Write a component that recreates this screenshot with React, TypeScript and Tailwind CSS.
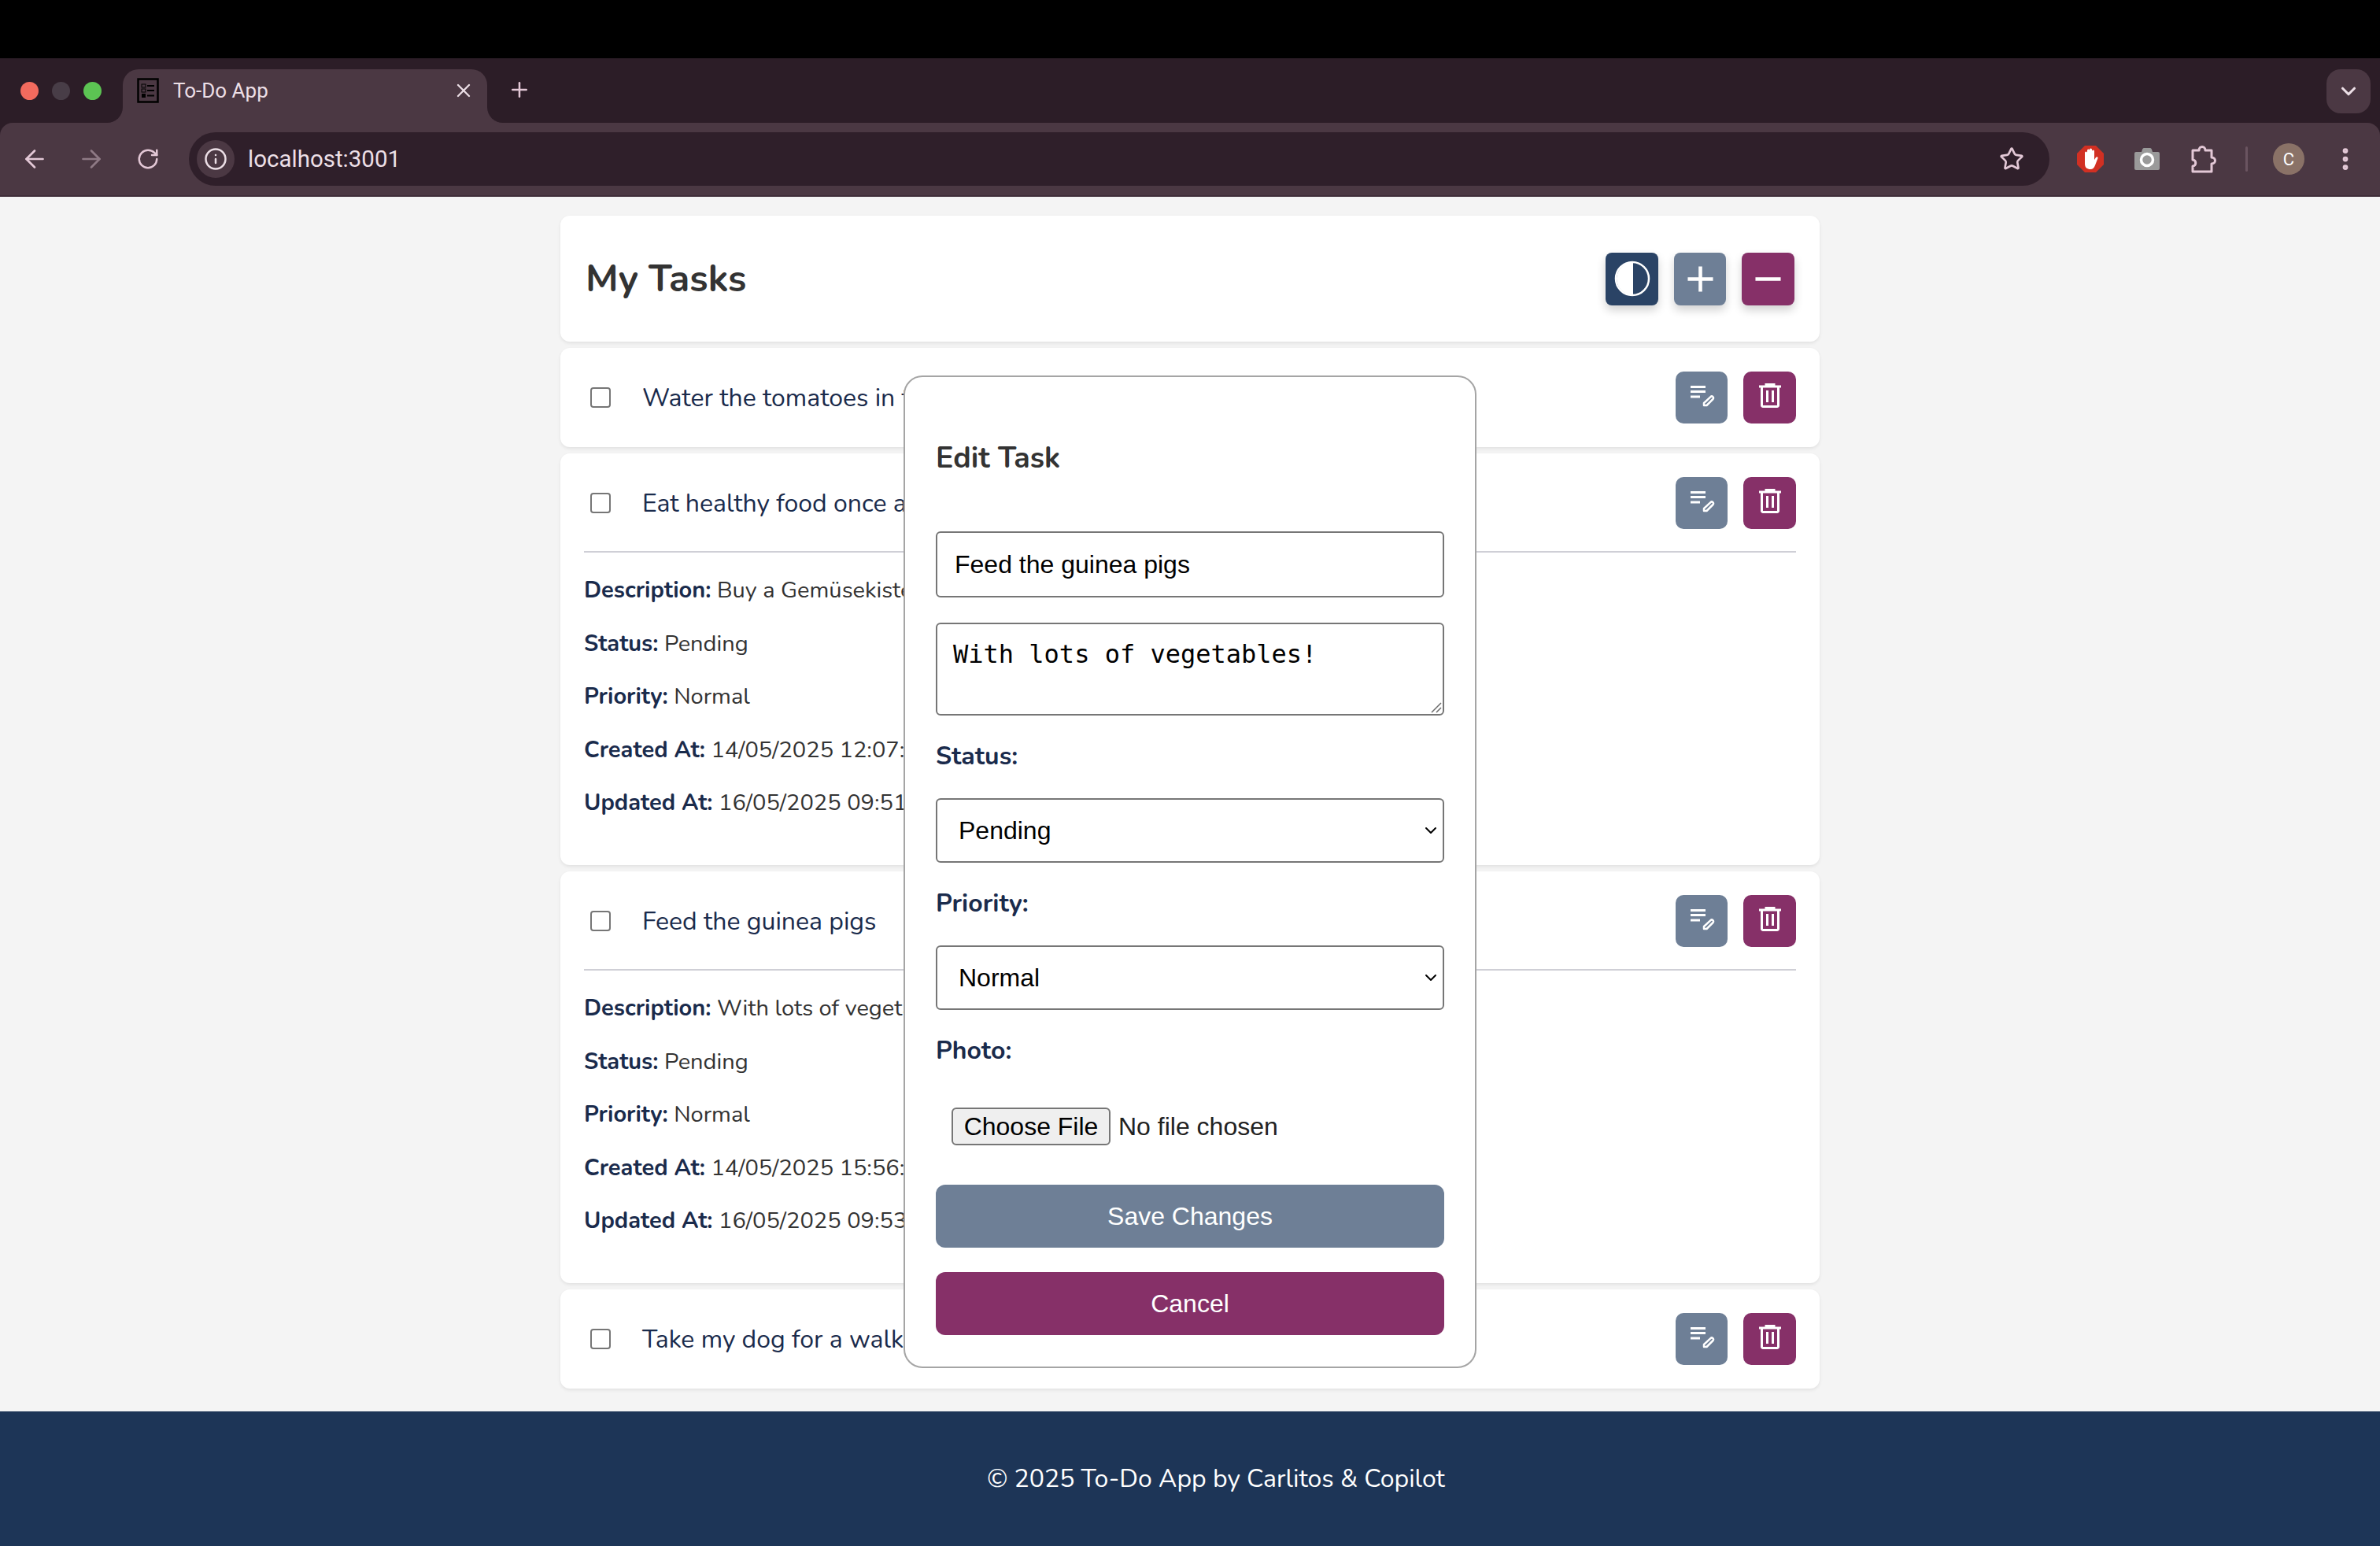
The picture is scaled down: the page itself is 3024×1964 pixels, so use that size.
import React from 'react';
import { ArrowLeft, ArrowRight, ChevronDown, EllipsisVertical, Info, Plus, RotateCw, Star, X } from 'lucide-react';
import { MdAdd, MdRemove } from 'react-icons/md';

const uiFont = "font-['Nunito','Lato','Noto_Sans',sans-serif]";
const formFont = "font-['Liberation_Sans',Arial,sans-serif]";

const Favicon = () => (
  <svg width="28" height="32" viewBox="0 0 28 32" fill="none">
    <rect x="1.5" y="1.5" width="25" height="29" fill="#4b3843" stroke="#000" strokeWidth="2.5" />
    <rect x="6" y="8" width="5" height="4" stroke="#000" strokeWidth="1" />
    <rect x="6" y="14" width="5" height="4" stroke="#000" strokeWidth="1" />
    <rect x="6" y="20" width="5" height="5" fill="#000" />
    <path d="M13 10h9M13 16h9M13 22.5h9" stroke="#000" strokeWidth="2" />
  </svg>
);

const AdBlock = () => (
  <svg width="34" height="34" viewBox="0 0 34 34">
    <path d="M10 0h14l10 10v14L24 34H10L0 24V10z" fill="#d13023" />
    <path
      d="M10 15V9a1.5 1.5 0 0 1 3 0v5V6a1.5 1.5 0 0 1 3 0v8V5a1.5 1.5 0 0 1 3 0v9V7a1.5 1.5 0 0 1 3 0v11l2-3c1-1.5 3-.5 2.5 1L23 25c-1 3-3 5-6 5-4 0-7-2-7-7z"
      fill="#fff"
    />
  </svg>
);

const Camera = () => (
  <svg width="32" height="32" viewBox="0 0 32 32">
    <path d="M2 7h7l1-3c.3-1 1-2 2-2h8c1 0 1.700 1 2 2l1 3h7a2 2 0 0 1 2 2v19a2 2 0 0 1-2 2H2a2 2 0 0 1-2-2V9a2 2 0 0 1 2-2z" fill="#9a9a9a" />
    <circle cx="16" cy="17" r="7.500" fill="none" stroke="#fff" strokeWidth="3.500" />
  </svg>
);

const Extensions = () => (
  <svg width="34" height="36" viewBox="0 0 34 36" fill="none" stroke="#e3c8d6" strokeWidth="3" strokeLinejoin="round">
    <path d="M3 7h8c0-6 8-6 8 0h8v9c6 0 6 8 0 8v10H3v-7c5 0 5-8 0-8z" />
  </svg>
);

const ContrastIcon = () => (
  <svg width="46" height="46" viewBox="0 0 46 46">
    <circle cx="23" cy="23" r="21" fill="none" stroke="#fff" strokeWidth="2.500" />
    <path d="M25 2a21 21 0 0 0 0 42z" fill="#fff" transform="translate(-1 0)" />
  </svg>
);

const EditIcon = () => (
  <svg width="31" height="27" viewBox="0 0 31 27" fill="none" className="-mt-[4px] ml-[3px]">
    <path d="M0 1.500h19M0 7.500h19M0 14h12" stroke="#fff" strokeWidth="3" />
    <path d="M16 22l8.500-7.800a2 2 0 0 1 3 2.800L19.500 25H16z" stroke="#fff" strokeWidth="2.500" strokeLinejoin="round" transform="translate(1 0)" />
  </svg>
);

const TrashIcon = () => (
  <svg width="28" height="31" viewBox="0 0 28 31" fill="none" className="-mt-[6px]">
    <path d="M0 4h28M9 3V1h10v2" stroke="#fff" strokeWidth="3" />
    <path d="M3.500 4v24a1.500 1.500 0 0 0 1.500 1.500h18a1.500 1.500 0 0 0 1.500-1.500V4" stroke="#fff" strokeWidth="3" />
    <path d="M10.500 9v15M17.500 9v15" stroke="#fff" strokeWidth="3" />
  </svg>
);

const BrowserChrome = () => (
  <>
    <div className="h-[74px] bg-black" />
    <div className="flex h-[82px] bg-[#2c1d27]">
      <div className="flex w-[156px] items-center gap-[17px] pl-[26px]">
        <span className="h-[23px] w-[23px] rounded-full bg-[#f26b5e]" />
        <span className="h-[23px] w-[23px] rounded-full bg-[#483d47]" />
        <span className="h-[23px] w-[23px] rounded-full bg-[#5cc453]" />
      </div>
      <div className="relative mt-[14px] flex w-[463px] items-center rounded-t-[20px] bg-[#4b3843] pb-[14px] pl-[18px] pr-[16px]">
        <span className="absolute -left-[20px] bottom-0 h-5 w-5 bg-[#4b3843]">
          <span className="block h-5 w-5 rounded-br-[20px] bg-[#2c1d27]" />
        </span>
        <span className="absolute -right-[20px] bottom-0 h-5 w-5 bg-[#4b3843]">
          <span className="block h-5 w-5 rounded-bl-[20px] bg-[#2c1d27]" />
        </span>
        <Favicon />
        <span className="ml-[18px] flex-1 font-['Roboto',sans-serif] text-[26px] text-[#ecdfe6]">To-Do App</span>
        <X size={28} strokeWidth={2} className="text-[#ecdfe6]" />
      </div>
      <div className="ml-[13px] flex h-[68px] w-[56px] items-center justify-center self-end pb-[16px]">
        <Plus size={30} strokeWidth={2} className="text-[#e3c8d6]" />
      </div>
      <div className="flex-1" />
      <div className="mr-[12px] mt-[14px] flex h-[56px] w-[56px] items-center justify-center rounded-[18px] bg-[#4b3843]">
        <ChevronDown size={30} strokeWidth={2.500} className="text-[#ecdfe6]" />
      </div>
    </div>
    <div className="bg-[#2c1d27]">
      <div className="flex h-[94px] items-center rounded-t-[16px] border-b-2 border-[#3f2e39] bg-[#4b3843] pl-[8px] pr-[8px]">
        <div className="flex w-[72px] justify-center text-[#e3c8d6]">
          <ArrowLeft size={36} strokeWidth={1.800} />
        </div>
        <div className="flex w-[72px] justify-center text-[#8e7a85]">
          <ArrowRight size={36} strokeWidth={1.800} />
        </div>
        <div className="flex w-[72px] justify-center text-[#e3c8d6]">
          <RotateCw size={30} strokeWidth={2} />
        </div>
        <div className="ml-[16px] flex h-[68px] flex-1 items-center rounded-full bg-[#2f1f2a] pl-[10px] pr-[12px]">
          <div className="flex h-[48px] w-[48px] items-center justify-center rounded-full bg-[#4b3843]">
            <Info size={30} strokeWidth={2} className="text-[#ecdfe6]" />
          </div>
          <span className="ml-[17px] flex-1 font-['Roboto',sans-serif] text-[29.500px] text-[#ecdfe6]">localhost:3001</span>
          <div className="flex w-[72px] justify-center">
            <Star size={32} strokeWidth={2} className="text-[#e3c8d6]" />
          </div>
        </div>
        <div className="ml-[16px] flex w-[72px] justify-center">
          <AdBlock />
        </div>
        <div className="flex w-[72px] justify-center">
          <Camera />
        </div>
        <div className="flex w-[72px] justify-center">
          <Extensions />
        </div>
        <div className="flex w-[36px] justify-center">
          <span className="h-[32px] w-[3px] rounded-full bg-[#6a5460]" />
        </div>
        <div className="flex w-[72px] justify-center">
          <span className="flex h-[40px] w-[40px] items-center justify-center rounded-full bg-[#8a7267] font-['Roboto',sans-serif] text-[22px] text-white">C</span>
        </div>
        <div className="flex w-[72px] justify-center">
          <EllipsisVertical size={36} strokeWidth={2.500} className="text-[#e3c8d6]" />
        </div>
      </div>
    </div>
  </>
);

const TaskActions = () => (
  <div className="flex gap-[20px]">
    <button className="flex h-[66px] w-[66px] items-center justify-center rounded-[10px] bg-[#6e7f96]">
      <EditIcon />
    </button>
    <button className="flex h-[66px] w-[67px] items-center justify-center rounded-[10px] bg-[#863068]">
      <TrashIcon />
    </button>
  </div>
);

const Detail = ({ label, value }: { label: string; value: string }) => (
  <p className="mt-[27.5px] h-[40px] text-[29px] leading-[40px] text-[#333333] first:mt-0">
    <strong className="font-bold text-[#1a2b4c]">{label}</strong> {value}
  </p>
);

interface TaskProps {
  title: string;
  details?: { label: string; value: string }[];
}

const TaskCard = ({ title, details }: TaskProps) => (
  <div className="rounded-[12px] bg-white px-[30px] shadow-[0_2px_4px_rgba(0,0,0,0.08)]">
    <div className={`flex items-center ${details ? 'h-[124px] pt-[2px]' : 'h-[126px]'}`}>
      <input type="checkbox" className="ml-[8px] h-[26px] w-[26px] appearance-none rounded-[4px] border-2 border-[#767676] bg-white" />
      <span className="ml-[40px] flex-1 pt-[1px] text-[32px] text-[#1a2b4c]">{title}</span>
      <TaskActions />
    </div>
    {details && (
      <div className="border-t-2 border-[#cfcfd6] pb-[59px] pt-[28px]">
        {details.map((d) => (
          <Detail key={d.label} {...d} />
        ))}
      </div>
    )}
  </div>
);

const fieldClass = `w-full rounded-[6px] border-2 border-[#767676] bg-white text-[32px] text-black ${formFont}`;

const SelectField = ({ value }: { value: string }) => (
  <div className="relative mt-[33px]">
    <select defaultValue={value} className={`h-[82px] appearance-none px-[27px] ${fieldClass}`}>
      <option>{value}</option>
    </select>
    <ChevronDown size={24} strokeWidth={2} className="absolute right-[5px] top-[29px] text-black" />
  </div>
);

const EditModal = () => (
  <div className={`absolute left-1/2 top-[477px] flex w-[728px] -translate-x-1/2 flex-col rounded-[24px] border-2 border-[#a5a5a5] bg-white px-[39px] pb-[40px] ${uiFont}`}>
    <h3 className="mt-[75px] h-[56px] text-[37.500px] font-bold leading-[56px] text-[#333333]">Edit Task</h3>
    <input readOnly defaultValue="Feed the guinea pigs" className={`mt-[65px] h-[84px] px-[22px] ${fieldClass}`} />
    <div className="relative mt-[32px] h-[118px]">
      <textarea
        readOnly
        defaultValue="With lots of vegetables!"
        className="block h-[118px] w-full resize-none rounded-[6px] border-2 border-[#767676] bg-white px-[20px] py-[19px] font-['DejaVu_Sans_Mono',monospace] text-[32px] leading-[38px] text-black"
      />
      <svg width="14" height="14" viewBox="0 0 14 14" className="absolute bottom-[3px] right-[3px]" stroke="#6b6b6b" strokeWidth="1.500">
        <path d="M1 13L13 1M7 13l6-6" />
      </svg>
    </div>
    <label className="mt-[32px] h-[40px] text-[32px] font-bold leading-[40px] text-[#1a2b4c]">Status:</label>
    <SelectField value="Pending" />
    <label className="mt-[32px] h-[40px] text-[32px] font-bold leading-[40px] text-[#1a2b4c]">Priority:</label>
    <SelectField value="Normal" />
    <label className="mt-[32px] h-[40px] text-[32px] font-bold leading-[40px] text-[#1a2b4c]">Photo:</label>
    <div className={`mt-[52px] flex items-center pl-[20px] text-[32px] text-[#222222] ${formFont}`}>
      <button className="h-[48px] w-[202px] rounded-[6px] border-2 border-[#767676] bg-[#efefef] leading-none text-black">Choose File</button>
      <span className="ml-[10px]">No file chosen</span>
    </div>
    <button className={`mt-[50px] h-[80px] rounded-[12px] bg-[#6e7f96] text-[32px] text-white ${formFont}`}>Save Changes</button>
    <button className={`mt-[31px] h-[80px] rounded-[12px] bg-[#863068] text-[32px] text-white ${formFont}`}>Cancel</button>
  </div>
);

const tasks: TaskProps[] = [
  { title: 'Water the tomatoes in the garden' },
  {
    title: 'Eat healthy food once a day',
    details: [
      { label: 'Description:', value: 'Buy a Gemüsekiste' },
      { label: 'Status:', value: 'Pending' },
      { label: 'Priority:', value: 'Normal' },
      { label: 'Created At:', value: '14/05/2025 12:07:41' },
      { label: 'Updated At:', value: '16/05/2025 09:51:12' },
    ],
  },
  {
    title: 'Feed the guinea pigs',
    details: [
      { label: 'Description:', value: 'With lots of vegetables!' },
      { label: 'Status:', value: 'Pending' },
      { label: 'Priority:', value: 'Normal' },
      { label: 'Created At:', value: '14/05/2025 15:56:20' },
      { label: 'Updated At:', value: '16/05/2025 09:53:08' },
    ],
  },
  { title: 'Take my dog for a walk' },
];

export default function App() {
  return (
    <div className="relative flex h-[1964px] w-[3024px] flex-col overflow-hidden bg-[#f4f4f4]">
      <BrowserChrome />
      <main className={`mx-auto flex w-[1600px] flex-1 flex-col gap-[8px] pt-[24px] ${uiFont}`}>
        <div className="flex h-[160px] items-center justify-between rounded-[12px] bg-white pl-[32px] pr-[32px] shadow-[0_2px_4px_rgba(0,0,0,0.08)]">
          <h2 className="text-[48px] font-bold text-[#333333]">My Tasks</h2>
          <div className="flex gap-[20px]">
            <button className="flex h-[67px] w-[67px] items-center justify-center rounded-[8px] bg-[#2a4365] text-white shadow-[0_6px_12px_rgba(0,0,0,0.18)]">
              <ContrastIcon />
            </button>
            <button className="flex h-[67px] w-[66px] items-center justify-center rounded-[8px] bg-[#6e7f96] text-white shadow-[0_6px_12px_rgba(0,0,0,0.18)]">
              <MdAdd size={55} />
            </button>
            <button className="flex h-[67px] w-[67px] items-center justify-center rounded-[8px] bg-[#863068] text-white shadow-[0_6px_12px_rgba(0,0,0,0.18)]">
              <MdRemove size={55} />
            </button>
          </div>
        </div>
        {tasks.map((t) => (
          <TaskCard key={t.title} {...t} />
        ))}
      </main>
      <footer className={`flex h-[171px] items-center justify-center bg-[#1d3557] pl-[66px] text-[32px] text-white ${uiFont}`}>
        © 2025 To-Do App by Carlitos &amp; Copilot
      </footer>
      <EditModal />
    </div>
  );
}
